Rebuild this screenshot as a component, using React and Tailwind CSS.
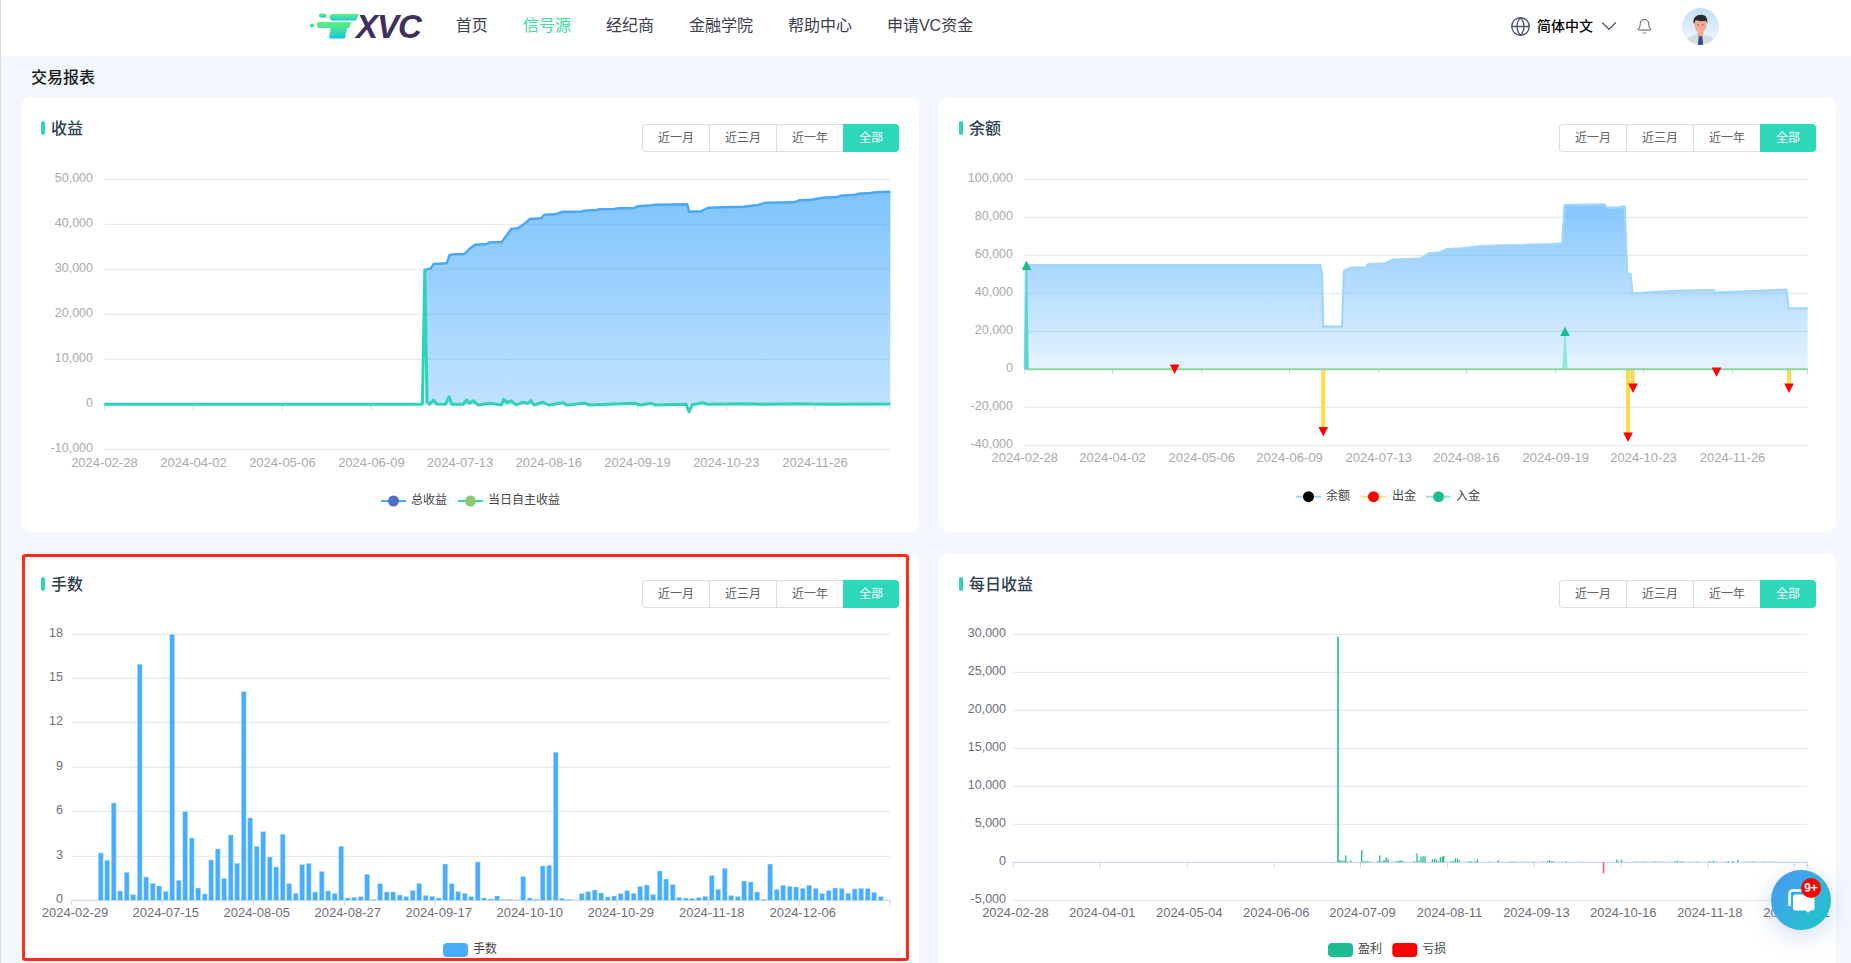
import { Globe, ChevronDown, Bell } from "lucide-react";

const NAV = ["首页", "信号源", "经纪商", "金融学院", "帮助中心", "申请VC资金"];
const RANGES = ["近一月", "近三月", "近一年"];

const GRID = "#e0e6f1";
const TICK = "#ccd6eb";
const FAINT = "#aaaaaa";
const DARK = "#6e7079";

// points were read off the zoomed reference, so convert them to page pixels
const toPage = (pts, sx, ox, oy) =>
  pts.map(([x, y]) => [ox + x / sx, oy + y / 3]);
const line = (pts) =>
  pts.map(([x, y]) => `${x.toFixed(1)},${y.toFixed(1)}`).join(" ");
const fmt = (n) => n.toLocaleString("en-US");

const PROFIT = toPage(
  [
    [720, 330], [730, 325], [735, 312], [757, 310], [762, 285], [770, 283], [787, 282], [795, 268],
    [805, 254], [825, 252], [830, 247], [850, 247], [857, 230], [867, 206], [878, 205], [890, 190],
    [898, 177], [917, 175], [923, 164], [940, 163], [955, 155], [985, 155], [990, 152], [1010, 150],
    [1015, 148], [1040, 147], [1050, 145], [1075, 144], [1080, 139], [1105, 136], [1110, 134], [1165, 133],
    [1168, 155], [1188, 154], [1200, 143], [1225, 142], [1260, 140], [1285, 135], [1298, 128], [1345, 127],
    [1355, 121], [1375, 119], [1395, 113], [1420, 111], [1425, 107], [1450, 104], [1455, 101], [1475, 99],
    [1485, 97], [1509, 95],
  ],
  1.695, 0, 160
);

const DAILY_PROFIT = toPage(
  [
    [177, 733], [716, 733], [720, 330], [724, 725], [728, 733], [735, 720], [740, 732], [755, 733], [761, 710],
    [766, 733], [785, 733], [791, 720], [796, 730], [802, 722], [810, 735], [830, 730], [850, 735], [854, 718],
    [860, 728], [866, 722], [875, 735], [885, 727], [895, 730], [900, 722], [905, 735], [920, 727], [930, 735],
    [955, 728], [960, 735], [990, 730], [1000, 735], [1075, 730], [1085, 735], [1105, 730], [1110, 735], [1163, 733],
    [1168, 756], [1173, 735], [1190, 728], [1200, 733], [1260, 731], [1300, 733], [1345, 731], [1400, 733], [1509, 732],
  ],
  1.695, 0, 160
);

const BALANCE = toPage(
  [
    [169, 628], [171, 315], [670, 315], [673, 340], [675, 500], [707, 500], [710, 332], [722, 323], [747, 323],
    [751, 312], [778, 311], [793, 299], [815, 297], [840, 296], [855, 279], [870, 278], [885, 267], [910, 265],
    [940, 259], [975, 256], [1010, 255], [1060, 252], [1080, 250], [1084, 135], [1152, 133], [1156, 143], [1175, 143],
    [1186, 139], [1190, 340], [1196, 342], [1199, 400], [1280, 392], [1337, 390], [1340, 398], [1400, 393], [1460, 389],
    [1464, 445], [1496, 445],
  ],
  1.695, 925, 160
);

// top of each bar in the zoomed picture, one per 19.5 zoomed px
const LOTS = [
  909, 931, 759, 1023, 967, 1034, 343, 981, 1000, 1008, 1024, 253, 991, 785, 864, 1014, 1032, 930, 897, 985, 855,
  940, 425, 804, 889, 845, 921, 951, 853, 1001, 1030, 944, 940, 1026, 964, 1023, 1030, 889, 1044, 1042, 1040, 973,
  1048, 1001, 1026, 1026, 1035, 1040, 1021, 1000, 1036, 1039, 1044, 942, 1001, 1025, 1030, 1040, 936, 1044, 1047,
  1038, 1049, 1048, 1050, 980, 1044, 1048, 948, 946, 607, 1045, 1048, 1051, 1031, 1025, 1020, 1029, 1041, 1038,
  1031, 1022, 1030, 1010, 1005, 1034, 963, 987, 1004, 1042, 1044, 1045, 1043, 1039, 977, 1018, 955, 1037, 1040,
  993, 996, 1026, 1048, 942, 1019, 1006, 1009, 1011, 1015, 1006, 1015, 1030, 1022, 1014, 1016, 1030, 1017, 1015,
  1016, 1027, 1040,
];

const DAILY_BARS = [
  [180, 120], [186, 122], [192, 122], [197, 106], [203, 125], [212, 121], [245, 90], [251, 124], [257, 124],
  [263, 124], [269, 125], [293, 124], [299, 106], [305, 124], [312, 120], [318, 112], [324, 116], [348, 124],
  [354, 124], [360, 120], [366, 122], [372, 125], [402, 124], [411, 100], [417, 122], [423, 110], [429, 109],
  [435, 109], [457, 118], [463, 116], [469, 118], [475, 124], [481, 112], [487, 110], [491, 108], [511, 124],
  [519, 122], [526, 115], [532, 116], [538, 121], [566, 124], [572, 124], [585, 124], [592, 118], [655, 121],
  [692, 125], [700, 124], [710, 125], [760, 125], [803, 124], [808, 120], [815, 123], [820, 125], [858, 124],
  [1010, 119], [1016, 124], [1025, 119], [1185, 124], [1192, 122], [1205, 124], [1290, 124], [1300, 122],
  [1345, 124], [1358, 123], [1373, 120],
];

const DAILY_FAINT = [
  625, 700, 735, 745, 760, 790, 845, 905, 1065, 1072, 1080, 1088, 1095, 1118, 1126, 1134, 1142, 1150, 1175, 1198,
  1210, 1230, 1250, 1285, 1310, 1340, 1395, 1403, 1411, 1419, 1427, 1450, 1458, 1466, 1474, 1482,
];

function YAxis({ ticks, right, x1, x2, color }) {
  return (
    <>
      {ticks.map(([label, y]) => (
        <g key={label}>
          <line x1={x1} x2={x2} y1={y} y2={y} stroke={GRID} />
          <text x={right} y={y - 0.5} fontSize="12.5" fill={color} textAnchor="end" dominantBaseline="middle">
            {label}
          </text>
        </g>
      ))}
    </>
  );
}

function XTicks({ xs, y }) {
  return xs.map((x) => <line key={x} x1={x} x2={x} y1={y} y2={y + 5} stroke={TICK} />);
}

function XLabels({ items, y, color }) {
  return items.map(([label, x]) => (
    <text key={label} x={x} y={y + 1} fontSize="13" fill={color} textAnchor="middle" dominantBaseline="middle">
      {label}
    </text>
  ));
}

function LineKey({ x, y, lineColor, dotColor, label, textX }) {
  return (
    <g>
      <line x1={x} x2={x + 25} y1={y + 1} y2={y + 1} stroke={lineColor} strokeWidth="2" />
      <circle cx={x + 12.5} cy={y + 1} r="5.5" fill={dotColor} />
      <text x={textX} y={y + 1} fontSize="12" fill="#444" dominantBaseline="middle">
        {label}
      </text>
    </g>
  );
}

function BoxKey({ x, y, color, label }) {
  return (
    <g>
      <rect x={x} y={y - 7} width="25" height="14" rx="4" fill={color} />
      <text x={x + 30} y={y} fontSize="12" fill="#444" dominantBaseline="middle">
        {label}
      </text>
    </g>
  );
}

function Arrow({ x, y, up }) {
  const tip = up ? y - 9.5 : y + 9.5;
  return <polygon points={`${x - 4.8},${y} ${x + 4.8},${y} ${x},${tip}`} fill={up ? "#1fbc93" : "#ff0000"} />;
}

function ProfitChart() {
  const y0 = 404.3;
  const ticks = [50000, 40000, 30000, 20000, 10000, 0, -10000].map((v, i) => [fmt(v), 179.3 + i * 45]);
  const xs = [104.4, 193.5, 282.4, 371.4, 460, 548.8, 637.5, 726.3, 815];
  const dates = ["2024-02-28", "2024-04-02", "2024-05-06", "2024-06-09", "2024-07-13", "2024-08-16", "2024-09-19", "2024-10-23", "2024-11-26"];
  const area = [[PROFIT[0][0], y0], ...PROFIT, [PROFIT[PROFIT.length - 1][0], y0]];
  return (
    <svg className="block" width="897" height="372" viewBox="21 160 897 372">
      <defs>
        <linearGradient id="profitFill" x1="0" y1="0" x2="0" y2="1">
          <stop offset="0" stopColor="#3aa4fc" stopOpacity="0.65" />
          <stop offset="1" stopColor="#3aa4fc" stopOpacity="0.32" />
        </linearGradient>
      </defs>
      <YAxis ticks={ticks} right={93} x1={104.4} x2={890} color={FAINT} />
      <XTicks xs={[...xs, 890]} y={y0} />
      <polygon points={line(area)} fill="url(#profitFill)" />
      <polyline points={line(PROFIT)} fill="none" stroke="#4aa8f7" strokeWidth="2.4" strokeLinejoin="round" />
      <polyline points={line(DAILY_PROFIT)} fill="none" stroke="#2dd4b8" strokeWidth="3" strokeLinejoin="round" />
      <XLabels items={dates.map((d, i) => [d, xs[i]])} y={463} color={FAINT} />
      <LineKey x={381} y={500} lineColor="#4aa8f7" dotColor="#4e6fc6" label="总收益" textX={411} />
      <LineKey x={458} y={500} lineColor="#2dd4b8" dotColor="#8cc870" label="当日自主收益" textX={488} />
    </svg>
  );
}

function BalanceChart() {
  const y0 = 369.3;
  const ticks = [100000, 80000, 60000, 40000, 20000, 0, -20000, -40000].map((v, i) => [fmt(v), 179.3 + i * 38]);
  const xs = [1024.7, 1112.6, 1201.7, 1289.6, 1378.7, 1466.6, 1555.7, 1643.6, 1732.6];
  const dates = ["2024-02-28", "2024-04-02", "2024-05-06", "2024-06-09", "2024-07-13", "2024-08-16", "2024-09-19", "2024-10-23", "2024-11-26"];
  const area = [...BALANCE, [BALANCE[BALANCE.length - 1][0], y0]];
  const drops = [
    [1323.2, 427],
    [1628, 433],
    [1632.5, 385],
    [1789, 385],
  ];
  const downs = [
    [1174.6, 364.5],
    [1323.2, 427],
    [1628, 432.5],
    [1633, 383.5],
    [1716.5, 367.5],
    [1789, 383.5],
  ];
  return (
    <svg className="block" width="897" height="372" viewBox="939 160 897 372">
      <defs>
        <linearGradient id="balanceFill" x1="0" y1="0" x2="0" y2="1">
          <stop offset="0" stopColor="#3aa4fc" stopOpacity="0.62" />
          <stop offset="1" stopColor="#3aa4fc" stopOpacity="0.13" />
        </linearGradient>
      </defs>
      <YAxis ticks={ticks} right={1013} x1={1024.7} x2={1807.6} color={FAINT} />
      <XTicks xs={[...xs, 1807.6]} y={y0} />
      <polygon points={line(area)} fill="url(#balanceFill)" />
      <polyline points={line(BALANCE)} fill="none" stroke="#a2d6fc" strokeWidth="2.2" strokeLinejoin="round" />
      <polyline points={`1025,${y0} 1026.5,265 1028,${y0}`} fill="#55d8d0" stroke="#55d8d0" strokeWidth="1.5" />
      <polyline points={`1563,${y0} 1565,335 1567,${y0}`} fill="#8fe8d6" stroke="#8fe8d6" strokeWidth="1.5" />
      {drops.map(([x, y]) => (
        <line key={x} x1={x} x2={x} y1={y0} y2={y} stroke="#ffd84d" strokeWidth="4" />
      ))}
      <line x1={1026} x2={1807.6} y1={y0} y2={y0} stroke="#8cd79e" strokeWidth="2" />
      {downs.map(([x, y]) => (
        <Arrow key={x} x={x} y={y} />
      ))}
      <Arrow x={1026.5} y={270} up />
      <Arrow x={1565} y={336} up />
      <XLabels items={dates.map((d, i) => [d, xs[i]])} y={458} color={FAINT} />
      <LineKey x={1296} y={495.7} lineColor="#9ed3fb" dotColor="#000000" label="余额" textX={1326} />
      <LineKey x={1361} y={495.7} lineColor="#ffe27a" dotColor="#ff0000" label="出金" textX={1392} />
      <LineKey x={1426} y={495.7} lineColor="#8fe8d6" dotColor="#1fbc93" label="入金" textX={1456} />
    </svg>
  );
}

function LotsChart() {
  const y0 = 900.3;
  const ticks = [18, 15, 12, 9, 6, 3, 0].map((v, i) => [String(v), [634.3, 678.3, 722.3, 767.3, 811.3, 856.3, 900.3][i]]);
  const xs = [71.7, 162.3, 253.3, 344.3, 435.3, 526.3, 617.3, 708.3, 799.3, 890];
  const labels = [
    ["2024-02-29", 75],
    ["2024-07-15", 165.7],
    ["2024-08-05", 256.7],
    ["2024-08-27", 347.7],
    ["2024-09-17", 438.7],
    ["2024-10-10", 529.7],
    ["2024-10-29", 620.7],
    ["2024-11-18", 711.7],
    ["2024-12-06", 802.7],
  ];
  return (
    <svg className="block" width="897" height="372" viewBox="21 616 897 372">
      <YAxis ticks={ticks} right={63} x1={71.7} x2={890} color={DARK} />
      <line x1={71.7} x2={890} y1={y0} y2={y0} stroke={TICK} />
      <XTicks xs={xs} y={y0} />
      {LOTS.map((top, i) => {
        const cx = 100.7 + i * 6.5;
        const y = 550 + top / 3;
        return (
          <rect key={i} x={cx - 2.4} y={y} width="4.8" height={Math.max(y0 - y, 0)} fill="#47aeff" stroke="#b5dcff" strokeWidth="0.5" />
        );
      })}
      <XLabels items={labels} y={913} color={DARK} />
      <BoxKey x={443} y={950} color="#47aeff" label="手数" />
    </svg>
  );
}

function DailyChart() {
  const y0 = 862.3;
  const ticks = [30000, 25000, 20000, 15000, 10000, 5000, 0, -5000].map((v, i) => [fmt(v), 634.3 + i * 38]);
  const xs = [1013.4, 1100.3, 1187.3, 1274.2, 1360.5, 1447.5, 1534.4, 1621.3, 1707.7, 1794.6, 1807.5];
  const dates = ["2024-02-28", "2024-04-01", "2024-05-04", "2024-06-06", "2024-07-09", "2024-08-11", "2024-09-13", "2024-10-16", "2024-11-18", "2024-12-21"];
  return (
    <svg className="block" width="897" height="372" viewBox="939 616 897 372">
      <YAxis ticks={ticks} right={1006} x1={1013.4} x2={1807.5} color={DARK} />
      <line x1={1013.4} x2={1807.5} y1={y0} y2={y0} stroke={TICK} />
      <XTicks xs={xs} y={y0} />
      <rect x={1337.2} y={636.7} width="1.6" height={y0 - 636.7} fill="#1fbc93" />
      {DAILY_BARS.map(([x, top]) => (
        <rect key={x} x={1280 + x / 3 - 0.6} y={820 + top / 3} width="1.3" height={y0 - 820 - top / 3} fill="#1fbc93" />
      ))}
      {DAILY_FAINT.map((x) => (
        <rect key={x} x={1280 + x / 3 - 0.6} y={861} width="1.6" height="1.3" fill="#a8e4d4" />
      ))}
      <rect x={1602.8} y={y0} width="1.5" height="11" fill="#f5576c" />
      <XLabels items={dates.map((d, i) => [d, xs[i] + 2])} y={913} color={DARK} />
      <BoxKey x={1328} y={950} color="#1fbc93" label="盈利" />
      <BoxKey x={1392.3} y={950} color="#ff0000" label="亏损" />
    </svg>
  );
}

function RangeButtons() {
  return (
    <div className="flex h-[28px] mt-[3px] text-[12px] text-[#606266]">
      {RANGES.map((r, i) => (
        <button
          key={r}
          type="button"
          className={`w-[67px] border-y border-l border-[#dcdfe6] bg-white ${i === 0 ? "rounded-l-[4px]" : ""}`}
        >
          {r}
        </button>
      ))}
      <button type="button" className="w-[56px] rounded-r-[4px] bg-[#2dd8b8] text-white">
        全部
      </button>
    </div>
  );
}

function Card({ title, children }) {
  return (
    <section className="h-[435px] overflow-hidden rounded-[10px] bg-white">
      <div className="flex h-[63px] items-start justify-between pl-[20px] pr-[20px] pt-[24px]">
        <div className="flex h-[14px] items-center gap-[6px]">
          <span className="h-[14px] w-[4px] rounded-[2px] bg-[#2dd4b8]" />
          <h2 className="mt-[2px] text-[16px] font-medium text-[#2c3e50]">{title}</h2>
        </div>
        <RangeButtons />
      </div>
      {children}
    </section>
  );
}

function Logo() {
  return (
    <div className="flex items-center">
      <svg width="49" height="26" viewBox="0 0 49 26" className="block">
        <defs>
          <linearGradient id="logoFill" x1="0" y1="0" x2="0" y2="1">
            <stop offset="0" stopColor="#5cf27c" />
            <stop offset="0.55" stopColor="#3ddcae" />
            <stop offset="1" stopColor="#12c4e0" />
          </linearGradient>
        </defs>
        <g fill="url(#logoFill)">
          <circle cx="2" cy="12.5" r="2" fill="#3ddc9e" />
          <rect x="9" y="0.5" width="7.5" height="4" rx="2" />
          <path d="M22 1h27l-3 6.5H24a3 3 0 0 1-2-6.5z" />
          <path d="M9 9h32l-1.5 6H37l-2 10.5H19l1.5-10.5H11a3 3 0 0 1-2-6z" />
        </g>
      </svg>
      <span className="ml-[-3px] font-['Liberation_Sans',sans-serif] text-[33px] font-bold italic leading-none tracking-[-1px] text-[#3f2f5f]">
        XVC
      </span>
    </div>
  );
}

function Avatar() {
  return (
    <svg width="37" height="37" viewBox="0 0 110 110" className="block rounded-full">
      <defs>
        <linearGradient id="avatarBg" x1="0" y1="0" x2="0" y2="1">
          <stop offset="0" stopColor="#c4e0fb" />
          <stop offset="1" stopColor="#f4f8ff" />
        </linearGradient>
      </defs>
      <rect width="110" height="110" fill="url(#avatarBg)" />
      <path d="M12 110c0-22 14-30 43-32 29 2 43 10 43 32z" fill="#d3dde6" />
      <path d="M47 70h16v14l-8 8-8-8z" fill="#eeab8c" />
      <path d="M50 84h10l3 26H47z" fill="#2c4a8a" />
      <ellipse cx="55" cy="50" rx="18" ry="23" fill="#efae90" />
      <path d="M35 48c-4-18 6-28 22-28 14 0 20 10 18 26l-4-8c-8 2-22 2-30-2z" fill="#2a2a2e" />
      <circle cx="48" cy="50" r="1.8" fill="#3a2a24" />
      <circle cx="62" cy="50" r="1.8" fill="#3a2a24" />
    </svg>
  );
}

function ChatBubble() {
  return (
    <div className="fixed right-[20px] top-[870px] h-[60px] w-[60px] rounded-full bg-linear-to-br from-[#4a94f4] to-[#0fc9c4] shadow-[0_6px_24px_rgba(60,120,200,0.25)]">
      <svg width="60" height="60" viewBox="0 0 60 60" className="block">
        <path d="M18.5 36V23.5a3 3 0 0 1 3-3H31" fill="none" stroke="#fff" strokeWidth="2.6" />
        <rect x="22" y="24.5" width="21.5" height="16" rx="2.5" fill="#fff" />
        <polygon points="34.5,40 39.5,40 37,43" fill="#fff" />
      </svg>
      <span className="absolute left-[30px] top-[8px] flex h-[20px] w-[20px] items-center justify-center rounded-full bg-[#ff0000] text-[12px] font-bold text-white">
        9+
      </span>
    </div>
  );
}

export default function App() {
  return (
    <div className="h-[963px] overflow-hidden border-l border-[#dcdcdc] bg-[#f4f7fe] font-['Liberation_Sans','Noto_Sans_CJK_SC',sans-serif]">
      <header className="flex h-[56px] items-center bg-white pb-[4px] pl-[309px] pr-[132px]">
        <Logo />
        <nav className="ml-[35px] flex gap-[35px] text-[16px] text-[#3d3d4d]">
          {NAV.map((n) => (
            <a key={n} className={n === "信号源" ? "text-[#3edc9a]" : ""}>
              {n}
            </a>
          ))}
        </nav>
        <div className="ml-auto flex items-center">
          <Globe size={21} strokeWidth={1.5} className="text-[#4a5568]" />
          <span className="ml-[6px] text-[14px] font-medium text-black">简体中文</span>
          <ChevronDown size={26} strokeWidth={1.1} className="ml-[3px] text-[#4a5568]" />
          <Bell size={17} strokeWidth={1.3} className="ml-[14px] text-[#3d4554]" />
          <div className="ml-[29px]">
            <Avatar />
          </div>
        </div>
      </header>
      <h1 className="flex h-[41px] items-center pl-[30px] pt-[3px] text-[16px] font-medium text-[#1a1a1a]">交易报表</h1>
      <main className="grid grid-cols-[898px_897px] gap-x-[20px] gap-y-[21px] pl-[20px] pr-[15px]">
        <Card title="收益">
          <ProfitChart />
        </Card>
        <Card title="余额">
          <BalanceChart />
        </Card>
        <Card title="手数">
          <LotsChart />
        </Card>
        <Card title="每日收益">
          <DailyChart />
        </Card>
      </main>
      <div className="pointer-events-none absolute left-[22px] top-[554px] h-[407px] w-[887px] rounded-[3px] border-[3px] border-[#ff2a1a]" />
      <ChatBubble />
    </div>
  );
}
